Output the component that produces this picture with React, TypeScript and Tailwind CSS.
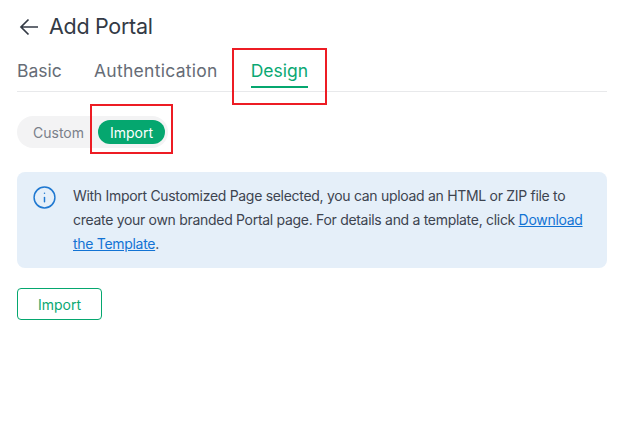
import { Info } from "lucide-react";

const font = { fontFamily: "Inter, 'Noto Sans', sans-serif" };

function BackArrow() {
  return (
    <svg width="20" height="18" viewBox="0 0 20 18" fill="none" stroke="#333a45" strokeWidth="1.7" className="ml-[2px] shrink-0">
      <path d="M19 9H2M9.5 1.5 2 9l7.5 7.5" />
    </svg>
  );
}

export default function App() {
  return (
    <div className="relative h-[432px] w-[619px] bg-white px-[17px] text-[#3d4450]" style={font}>
      <div className="flex h-[52px] items-center pt-[1px]">
        <BackArrow />
        <h1 className="ml-[10px] text-[21.5px] font-normal tracking-[-0.3px] text-[#333a45]">Add Portal</h1>
      </div>

      <div className="flex h-[40px] w-[590px] items-start gap-[33px] border-b border-[#e8e9eb] pt-[6px] text-[17.5px] text-[#666c76]">
        <span className="w-[44px]">Basic</span>
        <span className="tracking-[0.28px]">Authentication</span>
        <span className="relative text-[#0aa873]">
          Design
          <span className="absolute top-[28px] right-0 left-0 h-[2px] bg-[#05a76f]" />
        </span>
      </div>

      <div className="mt-[24px] flex h-[32px] w-[151px] items-center justify-between rounded-full bg-[#f3f3f4] pr-[3px] pl-[16px] text-[14px] text-[#7a808a]">
        <span>Custom</span>
        <span className="flex h-[24px] w-[67px] items-center justify-center rounded-full bg-[#05a76f] text-white">Import</span>
      </div>

      <div className="mt-[24px] flex h-[96px] w-[590px] rounded-lg bg-[#e5eff9] pt-[12px] pl-[15px]">
        <Info className="mt-[1px] h-[25px] w-[25px] shrink-0 text-[#1f78d1]" strokeWidth={1.4} />
        <p className="ml-[16px] w-[520px] text-[14px] leading-[24px] tracking-[-0.3px] text-[#3d4450]">
          With Import Customized Page selected, you can upload an HTML or ZIP file to create your own branded Portal page. For details and a template, click{" "}
          <a className="text-[#1273d4] underline">Download the Template</a>.
        </p>
      </div>

      <button type="button" className="mt-[20px] flex h-[32px] w-[85px] items-center justify-center rounded-[4px] border border-[#05a76f] text-[14px] text-[#0aa873]">
        Import
      </button>

      {/* red annotation boxes */}
      <div className="absolute top-[48px] left-[232px] h-[57px] w-[95px] border-2 border-[#ed1c24]" />
      <div className="absolute top-[104px] left-[90px] h-[50px] w-[83px] border-2 border-[#ed1c24]" />
    </div>
  );
}
